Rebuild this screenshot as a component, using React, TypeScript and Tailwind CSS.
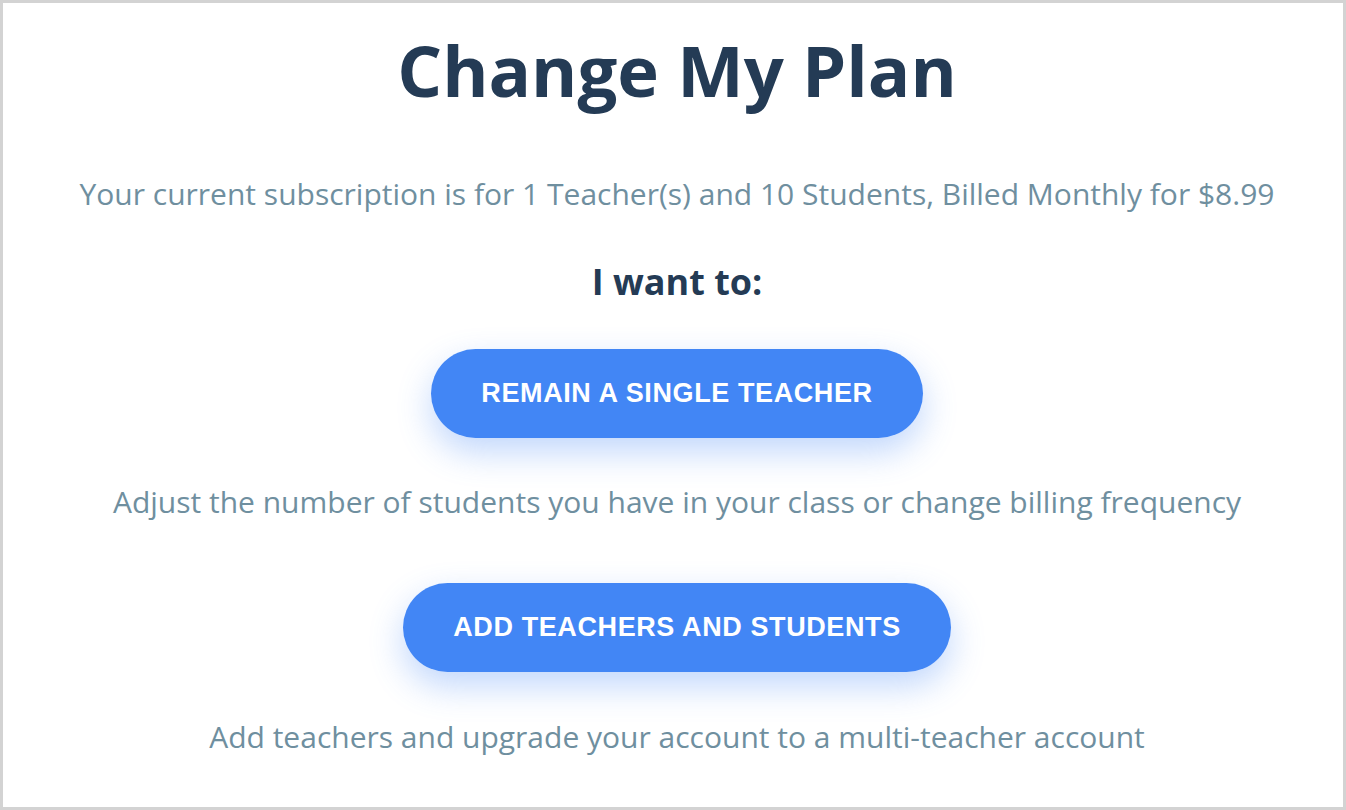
export default function App() {
  return (
    <div className="w-[1346px] h-[810px] bg-white border-[3px] border-[#d3d3d3] pl-[8px] flex flex-col items-center text-center font-['Open_Sans',sans-serif]">
      {/* Heading */}
      <h1 className="mt-[23px] text-[70.5px] leading-[88px] font-bold text-[#243b55]">
        Change My Plan
      </h1>

      <p className="mt-[60px] text-[30px] leading-[40px] text-[#6f8f9f]">
        Your current subscription is for 1 Teacher(s) and 10 Students, Billed
        Monthly for $8.99
      </p>

      <p className="mt-[44px] text-[36px] leading-[48px] font-bold text-[#243b55]">
        I want to:
      </p>

      {/* Option 1 */}
      <button
        type="button"
        className="mt-[43px] h-[89px] px-[50px] rounded-full bg-[#4286f5] text-white text-[27px] font-bold tracking-[0.6px] font-['Liberation_Sans',Arial,sans-serif] shadow-[0_14px_34px_rgba(66,134,245,0.33)]"
      >
        REMAIN A SINGLE TEACHER
      </button>
      <p className="mt-[44px] text-[30px] leading-[40px] text-[#6f8f9f]">
        Adjust the number of students you have in your class or change billing
        frequency
      </p>

      {/* Option 2 */}
      <button
        type="button"
        className="mt-[61px] h-[89px] px-[50px] rounded-full bg-[#4286f5] text-white text-[27px] font-bold tracking-[0.6px] font-['Liberation_Sans',Arial,sans-serif] shadow-[0_14px_34px_rgba(66,134,245,0.33)]"
      >
        ADD TEACHERS AND STUDENTS
      </button>
      <p className="mt-[45px] text-[30px] leading-[40px] text-[#6f8f9f]">
        Add teachers and upgrade your account to a multi-teacher account
      </p>
    </div>
  );
}
